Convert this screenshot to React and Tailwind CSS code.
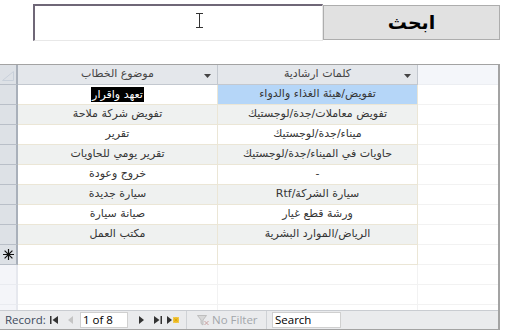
import React from "react";

const ROWS = [
  { subject: "تعهد واقرار", keys: "تفويض/هيئة الغذاء والدواء", active: true },
  { subject: "تفويض شركة ملاحة", keys: "تفويض معاملات/جدة/لوجستيك" },
  { subject: "تقرير", keys: "ميناء/جدة/لوجستيك" },
  { subject: "تقرير يومي للحاويات", keys: "حاويات في الميناء/جدة/لوجستيك" },
  { subject: "خروج وعودة", keys: "-" },
  { subject: "سيارة جديدة", keys: "سيارة الشركة/Rtf" },
  { subject: "صيانة سيارة", keys: "ورشة قطع غيار" },
  { subject: "مكتب العمل", keys: "الرياض/الموارد البشرية" },
];

const arabic = { fontFamily: '"DejaVu Sans", Tahoma, sans-serif' };
const ui = { fontFamily: '"Open Sans", "Noto Sans", sans-serif' };

const DropArrow = () => (
  <svg width="7" height="4" viewBox="0 0 7 4" className="absolute right-[6px] top-[9px]">
    <path d="M0 0h7L3.5 4z" fill="#444" />
  </svg>
);

const Star = () => (
  <svg width="11" height="11" viewBox="0 0 11 11">
    <g stroke="#111" strokeWidth="1.2">
      <path d="M5.5 0v11M0 5.5h11M1.6 1.6l7.8 7.8M9.4 1.6l-7.8 7.8" />
    </g>
  </svg>
);

const DataRow = ({ row, index }) => {
  const stripe = index % 2 === 1 ? "bg-[#eff1f0]" : "bg-white";
  return (
    <div className="flex h-[20px]">
      <div className="w-[18px] shrink-0 bg-[#dde1e6] border-r-2 border-r-[#a9b0ba] border-b border-b-[#b9bfc8]" />
      <div
        className={`w-[200px] shrink-0 flex items-center justify-center text-[11px] text-[#353535] border-r border-b border-[#ebe6d6] ${stripe}`}
        style={arabic}
        dir="rtl"
      >
        {row.active ? (
          <span className="bg-black text-white px-[1px] leading-[15px]">{row.subject}</span>
        ) : (
          row.subject
        )}
      </div>
      <div
        className={`w-[200px] shrink-0 flex items-center justify-center text-[11px] text-[#353535] border-r border-b border-[#ebe6d6] ${
          row.active ? "bg-[#b5d6f8]" : stripe
        }`}
        style={arabic}
        dir="rtl"
      >
        {row.keys}
      </div>
      <div className="flex-1 border-b border-[#f2f2f2]" />
    </div>
  );
};

const EmptyRow = () => (
  <div className="flex h-[20px]">
    <div className="w-[18px] shrink-0 bg-[#f4f5f9] border-r-2 border-r-[#e6e8ee] border-b border-b-[#e9ebf0]" />
    <div className="w-[200px] shrink-0 border-r border-b border-[#f2f2f2]" />
    <div className="w-[200px] shrink-0 border-r border-b border-[#f2f2f2]" />
    <div className="flex-1 border-b border-[#f2f2f2]" />
  </div>
);

const NavIcon = ({ type, dim }) => {
  const c = dim ? "#c4c4c4" : "#333";
  if (type === "first")
    return (
      <svg width="8" height="8" viewBox="0 0 8 8">
        <rect x="0" y="0" width="1.5" height="8" fill={c} />
        <path d="M8 0v8L2.5 4z" fill={c} />
      </svg>
    );
  if (type === "prev")
    return (
      <svg width="6" height="8" viewBox="0 0 6 8">
        <path d="M5 0v8L0 4z" fill={c} />
      </svg>
    );
  if (type === "next")
    return (
      <svg width="6" height="8" viewBox="0 0 6 8">
        <path d="M1 0v8l5-4z" fill={c} />
      </svg>
    );
  if (type === "last")
    return (
      <svg width="8" height="8" viewBox="0 0 8 8">
        <path d="M0 0v8l5.5-4z" fill={c} />
        <rect x="6.5" y="0" width="1.5" height="8" fill={c} />
      </svg>
    );
  return (
    <svg width="12" height="8" viewBox="0 0 12 8">
      <path d="M0 0v8l5-4z" fill={c} />
      <rect x="6" y="1" width="6" height="6" fill="#f2c94c" />
      <path d="M9 1.5v5M6.5 4h5M7.2 2.2l3.6 3.6M10.8 2.2l-3.6 3.6" stroke="#e0a800" strokeWidth="0.8" />
    </svg>
  );
};

export default function App() {
  return (
    <div className="w-[506px] h-[332px] bg-white overflow-hidden">
      {/* search row */}
      <div className="flex pt-[4px] pl-[33px]">
        <div className="relative w-[290px] h-[37px] bg-white border-t-2 border-l-2 border-t-[#6f6777] border-l-[#6f6777] border-r border-b border-r-[#e8e8e8] border-b-[#e8e8e8]">
          <svg width="7" height="15" viewBox="0 0 7 15" className="absolute left-[161px] top-[7px]">
            <path d="M0 0.5h7M0 14.5h7M3.5 0.5v14" stroke="#333" strokeWidth="1" fill="none" />
          </svg>
        </div>
        <button
          className="mt-[1px] w-[177px] h-[35px] bg-[#e1e1e1] border border-[#adadad] flex items-center justify-center text-[19px] font-bold text-black leading-none"
          style={arabic}
          dir="rtl"
        >
          ابحث
        </button>
      </div>

      {/* datasheet */}
      <div className="mt-[23px] w-[500px] h-[266px] border-t border-t-[#a3a3a3] border-r-2 border-r-[#a3a3a3] border-b border-b-[#a3a3a3] flex flex-col">
        <div className="flex h-[20px] shrink-0">
          <div className="relative w-[18px] shrink-0 bg-[#dde1e6] border-r-2 border-r-[#a9b0ba] border-b border-b-[#b9bfc8]">
            <svg width="12" height="10" viewBox="0 0 12 10" className="absolute right-[2px] bottom-[3px]">
              <path d="M0.5 9.5L11.5 0.5V9.5z" fill="none" stroke="#c8d0da" strokeWidth="1" />
            </svg>
          </div>
          <div
            className="relative w-[200px] shrink-0 bg-[#e4e7eb] border-r border-r-[#c3c8cf] border-b border-b-[#c3c8cf] flex items-center justify-center text-[11px] text-[#444]"
            style={arabic}
            dir="rtl"
          >
            موضوع الخطاب
            <DropArrow />
          </div>
          <div
            className="relative w-[200px] shrink-0 bg-[#e4e7eb] border-r border-r-[#c3c8cf] border-b border-b-[#c3c8cf] flex items-center justify-center text-[11px] text-[#444]"
            style={arabic}
            dir="rtl"
          >
            كلمات ارشادية
            <DropArrow />
          </div>
          <div className="flex-1 bg-[#f4f6fa] border-b border-b-[#eceef2]" />
        </div>

        <div className="flex-1 overflow-hidden">
          {ROWS.map((row, i) => (
            <DataRow key={i} row={row} index={i} />
          ))}
          <div className="flex h-[20px]">
            <div className="w-[18px] shrink-0 bg-[#dde1e6] border-r-2 border-r-[#a9b0ba] border-b border-b-[#b9bfc8] flex items-center justify-center">
              <Star />
            </div>
            <div className="w-[200px] shrink-0 border-r border-b border-[#ebe6d6]" />
            <div className="w-[200px] shrink-0 border-r border-b border-[#ebe6d6]" />
            <div className="flex-1 border-b border-[#f2f2f2]" />
          </div>
          <EmptyRow />
          <EmptyRow />
          <EmptyRow />
        </div>

        {/* record navigation bar */}
        <div
          className="h-[19px] shrink-0 bg-[#eaebed] border-t border-t-[#c9ccd1] flex items-center text-[11.5px] text-[#3d4a5c] whitespace-nowrap"
          style={ui}
        >
          <span className="pl-[5px] w-[50px]">Record:</span>
          <span className="flex items-center"><NavIcon type="first" /></span>
          <span className="ml-[10px] flex items-center"><NavIcon type="prev" dim /></span>
          <div className="ml-[6px] w-[48px] h-[16px] bg-white border border-[#d0d0d0] flex items-center pl-[2px] text-black">
            1 of 8
          </div>
          <span className="ml-[10px] flex items-center"><NavIcon type="next" /></span>
          <span className="ml-[10px] flex items-center"><NavIcon type="last" /></span>
          <span className="ml-[5px] flex items-center"><NavIcon type="new" /></span>
          <div className="ml-[7px] h-full border-l border-[#cfd2d6]" />
          <div className="ml-[10px] flex items-center text-[#a2a6ab]">
            <svg width="12" height="11" viewBox="0 0 12 11">
              <path d="M0.5 0.5h9L6 5v5L4 8.5V5z" fill="#d8d8d8" stroke="#b5b5b5" strokeWidth="0.8" />
              <path d="M7.5 6l4 4M11.5 6l-4 4" stroke="#c9a0a0" strokeWidth="1" />
            </svg>
            <span className="ml-[3px] w-[46px]">No Filter</span>
          </div>
          <div className="ml-[8px] h-full border-l border-[#cfd2d6]" />
          <div className="ml-[5px] w-[69px] h-[16px] bg-white border border-[#d0d0d0] flex items-center pl-[2px] text-black">
            Search
          </div>
        </div>
      </div>
    </div>
  );
}
